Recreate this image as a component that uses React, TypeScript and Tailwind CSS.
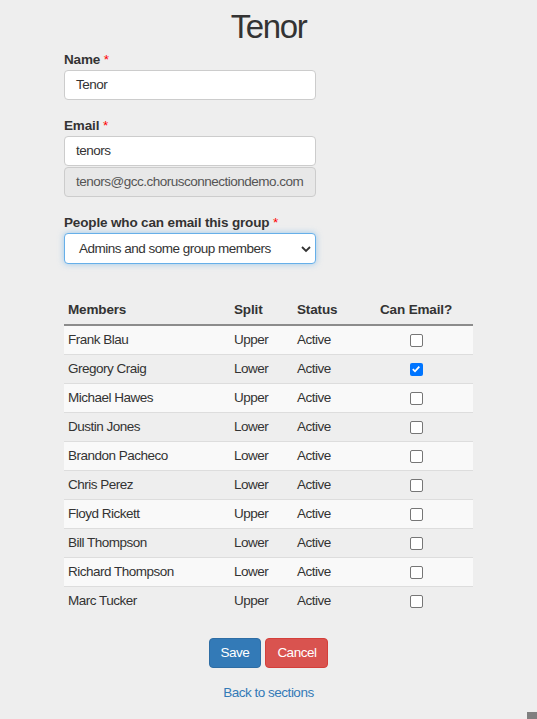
import React from "react";

const members: [string, string, boolean][] = [
  ["Frank Blau", "Upper", false],
  ["Gregory Craig", "Lower", true],
  ["Michael Hawes", "Upper", false],
  ["Dustin Jones", "Lower", false],
  ["Brandon Pacheco", "Lower", false],
  ["Chris Perez", "Lower", false],
  ["Floyd Rickett", "Upper", false],
  ["Bill Thompson", "Lower", false],
  ["Richard Thompson", "Lower", false],
  ["Marc Tucker", "Upper", false],
];

function Check({ checked }: { checked: boolean }) {
  if (checked) {
    return (
      <span className="inline-flex w-[13px] h-[13px] rounded-[2px] bg-[#0075ff] items-center justify-center align-middle">
        <svg width="10" height="10" viewBox="0 0 10 10">
          <path d="M1.8 5.2 L4 7.3 L8.3 2.6" stroke="#fff" strokeWidth="1.8" fill="none" />
        </svg>
      </span>
    );
  }
  return (
    <span className="inline-block w-[13px] h-[13px] rounded-[2px] border border-[#767676] bg-white align-middle" />
  );
}

export default function App() {
  return (
    <div
      className="relative min-h-[719px] bg-[#eeeeee] text-[#333333] text-[13.5px] leading-[20px] tracking-[-0.5px]"
      style={{ fontFamily: '"Liberation Sans", Arial, sans-serif' }}
    >
      <h1 className="pt-[9px] text-center text-[33px] leading-[36px] font-normal tracking-[-1.4px]">Tenor</h1>
      <div className="mx-auto w-[409px]">
        <div className="w-[252px]">
          <div className="mt-[5px]">
            <label className="block font-bold leading-[20px] tracking-[-0.15px]">
              Name <span className="text-[#ff0000] font-normal">*</span>
            </label>
            <div className="h-[30px] rounded-[4px] border border-[#cccccc] bg-white px-[11px] flex items-center">
              Tenor
            </div>
          </div>
          <div className="mt-[16px]">
            <label className="block font-bold leading-[20px] tracking-[-0.15px]">
              Email <span className="text-[#ff0000] font-normal">*</span>
            </label>
            <div className="h-[30px] rounded-[4px] border border-[#cccccc] bg-white px-[11px] flex items-center">
              tenors
            </div>
            <div className="mt-px h-[30px] rounded-[4px] border border-[#cccccc] bg-[#e8e8e8] px-[11px] flex items-center text-[#555555]">
              tenors@gcc.chorusconnectiondemo.com
            </div>
          </div>
          <div className="mt-[16px]">
            <label className="block font-bold leading-[20px] tracking-[-0.15px]">
              People who can email this group <span className="text-[#ff0000] font-normal">*</span>
            </label>
            <div className="h-[31px] rounded-[4px] border border-[#66afe9] bg-white pl-[14px] pr-[4px] flex items-center justify-between shadow-[0_0_6px_rgba(102,175,233,0.6)] text-[#333]">
              <span>Admins and some group members</span>
              <svg width="10" height="8" viewBox="0 0 10 8">
                <path d="M1 2 L5 6 L9 2" stroke="#333" strokeWidth="1.8" fill="none" />
              </svg>
            </div>
          </div>
        </div>

        <table className="mt-[32px] w-full border-collapse">
          <thead>
            <tr className="border-b-2 border-[#8c8c8c]">
              <th className="text-left py-1 px-1 font-bold tracking-[-0.15px] w-[166px]">Members</th>
              <th className="text-left py-1 px-1 font-bold tracking-[-0.15px] w-[63px]">Split</th>
              <th className="text-left py-1 px-1 font-bold tracking-[-0.15px] w-[66px]">Status</th>
              <th className="text-center py-1 px-1 font-bold tracking-[-0.15px]">Can Email?</th>
            </tr>
          </thead>
          <tbody>
            {members.map(([name, split, checked], i) => (
              <tr
                key={name}
                className={(i > 0 ? "border-t border-[#dddddd] " : "") + (i % 2 === 0 ? "bg-[#f9f9f9]" : "")}
              >
                <td className="py-1 px-1">{name}</td>
                <td className="py-1 px-1">{split}</td>
                <td className="py-1 px-1">Active</td>
                <td className="py-1 px-1 text-center">
                  <Check checked={checked} />
                </td>
              </tr>
            ))}
          </tbody>
        </table>

        <div className="mt-[23px] flex justify-center gap-[4px]">
          <button className="h-[30px] px-[11px] rounded-[4px] bg-[#337ab7] border border-[#2e6da4] text-white">
            Save
          </button>
          <button className="h-[30px] px-[11px] rounded-[4px] bg-[#d9534f] border border-[#d43f3a] text-white">
            Cancel
          </button>
        </div>
        <div className="mt-[15px] text-center">
          <a className="text-[#337ab7]">Back to sections</a>
        </div>
      </div>
      <div className="absolute right-0 bottom-0 w-[10px] h-[7px] bg-[#808080]" />
    </div>
  );
}
